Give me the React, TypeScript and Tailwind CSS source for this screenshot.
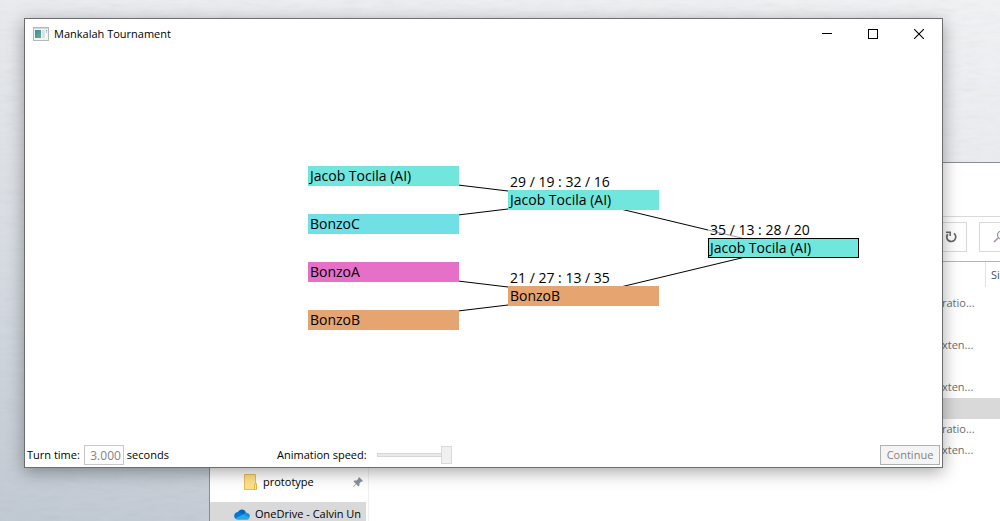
import React from "react";

type Node = { name: string; x: number; y: number; color: string; score?: string; outlined?: boolean };

const nodes: Node[] = [
  { name: "Jacob Tocila (AI)", x: 283, y: 117, color: "bg-[#70e6dc]" },
  { name: "BonzoC", x: 283, y: 165, color: "bg-[#70e0e6]" },
  { name: "BonzoA", x: 283, y: 213, color: "bg-[#e670c8]" },
  { name: "BonzoB", x: 283, y: 261, color: "bg-[#e6a570]" },
  { name: "Jacob Tocila (AI)", x: 483, y: 141, color: "bg-[#70e6dc]", score: "29 / 19 : 32 / 16" },
  { name: "BonzoB", x: 483, y: 237, color: "bg-[#e6a570]", score: "21 / 27 : 13 / 35" },
  { name: "Jacob Tocila (AI)", x: 683, y: 189, color: "bg-[#70e6dc]", score: "35 / 13 : 28 / 20", outlined: true },
];

const links: [number, number][] = [[0, 4], [1, 4], [2, 5], [3, 5], [4, 6], [5, 6]];

const fileTypes = ["ratio...", "", "xten...", "", "xten...", "", "ratio...", "xten..."];
const selectedRow = 5;

function Bracket() {
  return (
    <main className="relative flex-1">
      <svg className="absolute inset-0 h-full w-full" aria-hidden="true">
        {links.map(([from, to]) => (
          <line
            key={from}
            x1={nodes[from].x + 75}
            y1={nodes[from].y + 10}
            x2={nodes[to].x + 75}
            y2={nodes[to].y + 10}
            stroke="#000"
            strokeWidth="1"
          />
        ))}
      </svg>
      {nodes.map((n) => (
        <div key={n.x + "-" + n.y} className="absolute w-[151px] text-sm leading-5" style={{ left: n.x, top: n.y }}>
          {n.score && (
            <span className="absolute bottom-full left-0 bg-white/60 pl-0.5 leading-4 whitespace-nowrap">{n.score}</span>
          )}
          <div
            className={
              n.color +
              " relative h-5 whitespace-nowrap pl-0.5 " +
              (n.outlined ? "outline outline-1 -outline-offset-1 outline-black" : "")
            }
          >
            {n.name}
          </div>
        </div>
      ))}
    </main>
  );
}

function TitleBar() {
  return (
    <header className="flex h-[30px] items-center">
      <svg className="ml-2 h-[14px] w-4" viewBox="0 0 16 14" aria-hidden="true">
        <defs>
          <linearGradient id="app" x1="0" y1="0" x2="0.6" y2="1">
            <stop offset="0" stopColor="#4d80b8" />
            <stop offset="1" stopColor="#59ad80" />
          </linearGradient>
        </defs>
        <rect x="0.5" y="0.5" width="15" height="13" fill="#f3f3f3" stroke="#b5b8bb" />
        <path d="M1 1.5h14" stroke="#d4d7da" />
        <rect x="2" y="3" width="6" height="8" fill="url(#app)" />
        <rect x="9" y="3" width="3" height="8" fill="#dde0e2" />
        <rect x="12" y="3" width="2" height="8" fill="#f8f8f8" />
        <path d="M13 3.5h1M13 5h1" stroke="#75a9bd" />
      </svg>
      <h1 className="ml-[5px] flex-1 text-[11px]">Mankalah Tournament</h1>
      <button aria-label="Minimize" className="flex h-full w-[46px] items-center justify-center">
        <svg width="10" height="10" viewBox="0 0 10 10"><path d="M0 4.5h10" stroke="#000" /></svg>
      </button>
      <button aria-label="Maximize" className="flex h-full w-[46px] items-center justify-center">
        <svg width="10" height="10" viewBox="0 0 10 10"><rect x="0.5" y="0.5" width="9" height="9" fill="none" stroke="#000" /></svg>
      </button>
      <button aria-label="Close" className="flex h-full w-[46px] items-center justify-center">
        <svg width="10" height="10" viewBox="0 0 10 10"><path d="M0 0l10 10M10 0L0 10" stroke="#000" strokeWidth="1.1" /></svg>
      </button>
    </header>
  );
}

function Controls() {
  return (
    <footer className="flex h-6 items-center pr-0.5 pl-0.5 text-[11px]">
      <div className="flex w-[250px] items-center">
        <label htmlFor="turn">Turn time:</label>
        <input
          id="turn"
          disabled
          defaultValue="3.000"
          className="mr-[3px] ml-1 h-5 w-10 border border-[#c8c8c8] bg-white pr-0.5 text-right text-xs text-[#838383]"
        />
        <span>seconds</span>
      </div>
      <label htmlFor="speed">Animation speed:</label>
      <input
        id="speed"
        type="range"
        disabled
        min={0}
        max={10}
        defaultValue={10}
        className="ml-[10px] h-5 w-[75px] appearance-none bg-transparent [&::-webkit-slider-runnable-track]:h-1 [&::-webkit-slider-runnable-track]:border [&::-webkit-slider-runnable-track]:border-r-0 [&::-webkit-slider-runnable-track]:border-[#d6d6d6] [&::-webkit-slider-runnable-track]:bg-[#e7eaea] [&::-webkit-slider-thumb]:-mt-2 [&::-webkit-slider-thumb]:h-[18px] [&::-webkit-slider-thumb]:w-[11px] [&::-webkit-slider-thumb]:appearance-none [&::-webkit-slider-thumb]:border [&::-webkit-slider-thumb]:border-[#d9d9d9] [&::-webkit-slider-thumb]:bg-[#f0f0f0]"
      />
      <button disabled className="ml-auto h-5 w-[60px] border border-[#adb2b5] bg-[#f4f4f4] text-[11px] leading-4 text-[#838383]">
        Continue
      </button>
    </footer>
  );
}

function Explorer() {
  return (
    <section
      aria-label="File Explorer"
      className="absolute top-[162px] right-0 bottom-0 left-[209px] flex flex-col overflow-hidden border-t border-l border-[#8b8e91] bg-white text-[11px]"
    >
      <div className="h-[54px] shrink-0 border-b border-[#dadada]" />
      <div className="flex h-[45px] shrink-0 items-center gap-3 border-b border-[#b5b5b5] pb-1">
        <div className="flex h-[30px] flex-1 items-center justify-end border border-[#d9d9d9] pr-[9px]">
          <button aria-label="Refresh">
            <svg width="12" height="12" viewBox="0 0 12 12" fill="none" stroke="#666" strokeWidth="1.7">
              <path d="M9 2.400A4.500 4.500 0 1 1 2.800 3.100" />
              <path d="M5.200 5V1.200H1" strokeWidth="1.500" />
            </svg>
          </button>
        </div>
        <div className="flex h-[30px] w-[21px] items-center justify-end overflow-hidden border border-r-0 border-[#d9d9d9]">
          <svg width="7" height="14" viewBox="0 0 7 14" fill="none" aria-hidden="true">
            <path d="M1 12l4-4" stroke="#b88aa0" strokeWidth="1.6" />
            <circle cx="8.5" cy="5" r="4" stroke="#8795a8" strokeWidth="1.2" />
          </svg>
        </div>
      </div>
      <div className="flex min-h-0 flex-1">
        <nav className="flex w-[159px] shrink-0 flex-col overflow-hidden border-r border-[#f0f0f0] pt-[204px]">
          <a href="#prototype" className="mb-1 flex h-8 shrink-0 items-center pr-[5px] pl-[34px]">
            <svg className="mr-[6px]" width="13" height="16" viewBox="0 0 13 16" aria-hidden="true">
              <path d="M.5.5h11v9h1v6H.5z" fill="#ffe08a" stroke="#e6c04c" />
              <path d="M10.500 15V10h2v5" fill="#fff0b8" stroke="#e6b93c" />
            </svg>
            <span className="flex-1">prototype</span>
            <svg width="10" height="10" viewBox="0 0 10 10" fill="#87929c" aria-hidden="true">
              <path d="M6 0l4 4-1.200.8-.6-.3L6.400 6.500v2.200l-1 .8L3.200 7.200.5 10 0 9.500l2.800-2.700L.5 4.600l.8-1h2.200L5.500 1.800 5.200 1.200z" />
            </svg>
          </a>
          <a href="#onedrive" className="mr-0.5 flex h-6 shrink-0 items-center bg-[#d9d9d9] pl-6 whitespace-nowrap">
            <svg className="mr-[5px] shrink-0" width="16" height="11" viewBox="0 0 16 11" aria-hidden="true">
              <path d="M4 3.200C5.500-.4 10.700-.6 12 3.700L8 7z" fill="#0364b8" />
              <path d="M1 9.300C-1 6.500 1 3 4.300 3.100 6 3 7 4 10 5.500L4 10z" fill="#0078d4" />
              <path d="M9 5.200L12 3.700C15 3.700 16 6 16 7.500L13 9z" fill="#1490df" />
              <path d="M1 9.300L9 5.400 15.600 8.600C15.300 10 14.500 10.700 13 10.700H3.500C2.500 10.700 1.500 10.200 1 9.300z" fill="#28a8ea" />
            </svg>
            OneDrive - Calvin Un
          </a>
        </nav>
        <div className="flex-1 text-[#6d6d6d]">
          <div className="mb-[6px] flex h-[25px] justify-end">
            <span className="w-[15px] border-l border-[#e2e2e2] pl-[5px] leading-[25px] text-[#44546f]">Si</span>
          </div>
          <ul>
            {fileTypes.map((t, i) => (
              <li
                key={i}
                className={"flex h-[21px] items-center justify-end " + (i === selectedRow ? "bg-[#d9d9d9]" : "")}
              >
                <span className="w-[58px] whitespace-nowrap">{t}</span>
              </li>
            ))}
          </ul>
        </div>
      </div>
    </section>
  );
}

export default function App() {
  return (
    <div className="relative min-h-screen overflow-hidden bg-[linear-gradient(190deg,#f2f3f5_0%,#eaecef_25%,#d8dde3_60%,#c0c9d3_100%)] font-['Open_Sans','Noto_Sans',sans-serif] text-black">
      <svg className="absolute inset-0 h-full w-full opacity-10" aria-hidden="true">
        <filter id="brushed">
          <feTurbulence type="fractalNoise" baseFrequency="0.05 0.25" numOctaves="3" seed="4" />
          <feColorMatrix type="saturate" values="0" />
        </filter>
        <rect width="100%" height="100%" filter="url(#brushed)" />
      </svg>
      <Explorer />
      <section
        aria-label="Mankalah Tournament"
        className="absolute top-[18px] right-[57px] left-6 flex h-[450px] flex-col border border-[#6b6d70] bg-white shadow-[0_4px_16px_rgba(0,0,0,0.35)]"
      >
        <TitleBar />
        <Bracket />
        <Controls />
      </section>
    </div>
  );
}
